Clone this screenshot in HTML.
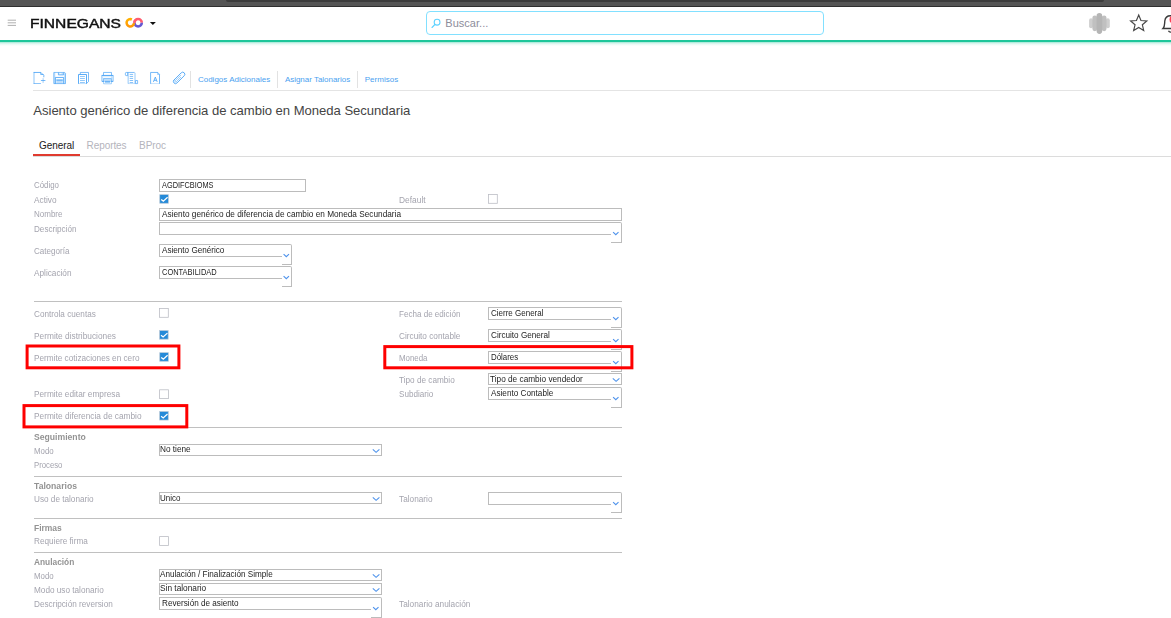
<!DOCTYPE html>
<html><head><meta charset="utf-8"><title>Finnegans</title>
<style>
html,body{margin:0;padding:0;}
html{width:1171px;height:618px;overflow:hidden;}
body{width:1171px;height:618px;overflow:hidden;background:#fff;position:relative;font-family:"Liberation Sans",sans-serif;}
.t{position:absolute;white-space:nowrap;line-height:1.117;font-family:"Liberation Sans",sans-serif;}
.a{position:absolute;box-sizing:border-box;}
#t0{-webkit-text-stroke:0.45px #111;}
.hr{position:absolute;left:34px;width:588px;height:1px;background:#c0c0c0;}
.inp{position:absolute;box-sizing:border-box;border:1px solid #bcbcbc;background:#fff;}
.cb{position:absolute;box-sizing:border-box;width:10px;height:10px;border:1px solid #b0b0b0;background:#fff;}
.cb.on{border:1px solid #9cc4ea;background:#2b8ad9;}
.cb.on svg{position:absolute;left:0;top:0;}
.red{position:absolute;box-sizing:border-box;border:2.4px solid #fe0000;}
.vsep{position:absolute;width:1px;top:71px;height:17px;background:#e2e2e2;}
.ca{position:absolute;box-sizing:border-box;border:1px solid #bcbcbc;border-right:none;background:#fff;height:13px;}
.cbt{position:absolute;box-sizing:border-box;border:1px solid #bcbcbc;border-left:none;border-top-right-radius:2px;background:#fff;height:21px;}
.chev{position:absolute;width:8px;height:5px;}
.ic{position:absolute;}

</style></head><body>
<div class="a" style="left:0;top:0;width:1171px;height:7px;background:#555;border-bottom:1px solid #2f2f2f"></div>
<div class="a" style="left:226px;top:0;width:878px;height:2px;background:#3c3c3c;border-radius:0 0 4px 4px"></div>
<div class="a" style="left:0;top:40px;width:1171px;height:2px;background:#1ec69a"></div>
<div class="a" style="left:0;top:42px;width:1171px;height:4px;background:linear-gradient(rgba(30,198,154,.42),rgba(30,198,154,.12) 45%,rgba(30,198,154,0))"></div>
<svg class="ic" style="left:7px;top:18px" width="10" height="10" viewBox="0 0 10 10"><g stroke="#9c9c9c" stroke-width="0.8"><line x1="0.7" y1="2.2" x2="9" y2="2.2"/><line x1="0.7" y1="4.8" x2="9" y2="4.8"/><line x1="0.7" y1="7.4" x2="9" y2="7.4"/></g></svg>
<svg class="ic" style="left:120px;top:12px" width="40" height="22" viewBox="120 12 40 22">
<defs><linearGradient id="og" x1="0" y1="0" x2="0" y2="1"><stop offset="0" stop-color="#ffb000"/><stop offset="1" stop-color="#ff9708"/></linearGradient></defs>
<g fill="none" stroke-width="2.55">
<path d="M 134.4 22.72 A 3.7 3.7 0 0 1 141.8 22.72" stroke="#ff5c6f"/>
<path d="M 141.8 22.72 A 3.7 3.7 0 0 1 134.4 22.72" stroke="#6559d3"/>
<path d="M 131.87 19.48 A 3.72 3.72 0 1 0 134.0 23.2" stroke="url(#og)"/>
<path d="M 134.4 22.72 A 3.7 3.7 0 0 1 136.2 19.55" stroke="#ff5c6f"/>
</g>
<path d="M149.9 22 L155.9 22 L152.9 25.1 Z" fill="#111"/>
</svg>
<div class="a" style="left:426px;top:11px;width:398px;height:24px;border:1px solid #82e0ff;border-radius:4px;background:#fff"></div>
<svg class="ic" style="left:430px;top:17px" width="12" height="12" viewBox="0 0 12 12"><g fill="none" stroke="#5fd2ff" stroke-width="1.1" stroke-linecap="round"><circle cx="7.1" cy="5.2" r="2.9"/><line x1="4.9" y1="7.5" x2="2" y2="10.5"/></g></svg>
<svg class="ic" style="left:1085px;top:10px" width="30" height="28" viewBox="1085 10 30 28"><defs><filter id="bl" x="-20%" y="-20%" width="140%" height="140%"><feGaussianBlur stdDeviation="0.35"/></filter></defs>
<g filter="url(#bl)"><rect x="1089.1" y="18.3" width="3.9" height="10" rx="1.95" fill="#cfcfcf"/><rect x="1105.9" y="18.3" width="3.9" height="10" rx="1.95" fill="#cfcfcf"/>
<rect x="1092.4" y="15.4" width="4.8" height="15.8" rx="2.4" fill="#c0c0c0"/><rect x="1101.7" y="15.4" width="4.8" height="15.8" rx="2.4" fill="#c0c0c0"/>
<rect x="1096.6" y="13" width="5.6" height="20.9" rx="2.8" fill="#b5b5b5"/></g></svg>
<svg class="ic" style="left:1127px;top:12px" width="24" height="24" viewBox="0 0 24 24"><polygon points="11.70,3.10 13.96,8.49 19.78,8.97 15.36,12.79 16.70,18.48 11.70,15.45 6.70,18.48 8.04,12.79 3.62,8.97 9.44,8.49" fill="none" stroke="#484848" stroke-width="1.2" stroke-linejoin="miter"/></svg>
<svg class="ic" style="left:1160px;top:13px" width="11" height="22" viewBox="0 0 11 22"><g fill="none" stroke="#3a3a3a" stroke-width="1.4"><path d="M3 15.5 C5 13.5 4.5 11 4.8 8 C5.2 4.6 7.5 2.8 10.5 2.8 C13.5 2.8 15.8 4.6 16.2 8 C16.5 11 16 13.5 18 15.5 Z"/><path d="M8.5 17.8 A2.2 2.2 0 0 0 12.5 17.8"/></g><circle cx="13.4" cy="6.4" r="3.9" fill="#fb4257"/></svg>
<svg class="ic" style="left:30px;top:68px" width="160" height="20" viewBox="30 68 160 20"><g fill="none" stroke="#3f9ef5"><path d="M33.6 72.45 H40.9" stroke-width=".8"/><path d="M34.0 72.2 V83.8 M33.6 83.5 H40.9" stroke-width=".6"/><path d="M40.9 72.45 L43.8 75.4 V77.3" stroke-width=".75"/><path d="M40.7 72.6 V74.5 H43.6" stroke-width=".7"/><path d="M40.9 80.5 H45.4" stroke-width=".7"/><path d="M43.1 78.2 V82.9" stroke-width=".6" opacity=".85"/><path d="M53.8 72.45 H64.7 L65.5 73.3 V83.6 H53.8 Z" stroke-width=".62"/><rect x="53.8" y="72.5" width="1.5" height="11.2" fill="#3f9ef5" stroke="none" opacity=".3"/><rect x="64" y="73.2" width="1.5" height="10.5" fill="#3f9ef5" stroke="none" opacity=".3"/><path d="M58.4 72.5 V74.9 H63.7 V72.5" stroke-width=".7"/><rect x="58.6" y="72.8" width="5" height="2" fill="#3f9ef5" stroke="none" opacity=".35"/><rect x="59.3" y="73.2" width="2.3" height=".9" fill="#fff" stroke="none"/><path d="M55.4 83.8 V77.45 H63.6 V83.8" stroke-width=".8"/><rect x="56.3" y="79.3" width="6.5" height="1.7" fill="#3f9ef5" stroke="none" opacity=".7"/><rect x="56.3" y="81" width="6.5" height="2.7" fill="#3f9ef5" stroke="none" opacity=".35"/><path d="M80.3 74.5 V72.45 H88.5 V81.6 L86.9 83.2" stroke-width=".68"/><path d="M78.5 83.8 V74.5 H86.5 V83.8" stroke-width=".85"/><path d="M78.5 83.55 H86.5" stroke-width=".5" opacity=".6"/><path d="M80 76.5 H84.9 M80 78.5 H84.9 M80 80.5 H84.9 M80 82.5 H84.9" stroke-width=".75" opacity=".75"/><path d="M103.5 75.2 V72.45 H111.5 V75.2" stroke-width=".65"/><rect x="101.5" y="75.3" width="12" height="6.3" rx="1" fill="#3f9ef5" stroke="none" opacity=".3"/><path d="M101.6 75.45 H113.4" stroke-width=".8"/><rect x="101.5" y="75.4" width="12" height="6.2" rx="1" stroke-width=".5" opacity=".55"/><rect x="103" y="76.5" width="8" height="1.4" fill="#fff" stroke="none" opacity=".9"/><path d="M101.9 81.3 H103.8 M111.2 81.3 H113.2" stroke-width=".9"/><path d="M103.6 83.8 V78.6 H111.4 V83.8 Z" stroke-width=".6" opacity=".8"/><rect x="105" y="80.8" width="5" height="1.9" fill="#3f9ef5" stroke="none" opacity=".65"/><path d="M127.6 75.6 H126.2 Q125.4 75.6 125.4 74.8 V73.3 Q125.4 72.45 126.3 72.45 H134.6" stroke-width=".68"/><path d="M127.6 72.6 V75.6" stroke-width=".6"/><rect x="127.6" y="72.6" width="1.1" height="11" fill="#3f9ef5" stroke="none" opacity=".5"/><rect x="134.4" y="72.8" width="1.2" height="10.8" fill="#3f9ef5" stroke="none" opacity=".45"/><path d="M128 83.55 H135.6" stroke-width=".5" opacity=".6"/><path d="M129.7 74.4 H133.1 M129.7 76.45 H133.1 M129.7 78.45 H133.1 M129.7 80.5 H133.1 M129.7 82.55 H133.1" stroke-width=".75" opacity=".85"/><path d="M135.6 80.5 H137.6 V83.6 H135.6 Z" stroke-width=".65"/><path d="M150.6 83.8 V72.45 H157.8 L159.5 74.4 V83.8" stroke-width=".72"/><path d="M150.6 83.55 H159.5" stroke-width=".5" opacity=".55"/><path d="M157.6 72.6 V74.5 H159.4" stroke-width=".6" opacity=".8"/><path d="M153.4 81.9 L155.3 77.1 L157.2 81.9 M154.1 80.3 H156.5" stroke-width=".8"/><g transform="rotate(-45 179.1 77.9)" stroke-linecap="round"><rect x="171.9" y="75.8" width="14.4" height="4.2" rx="2.1" stroke-width=".8"/><path d="M182.2 77.15 H174.3 A0.75 0.75 0 0 0 174.3 78.65 H180.6" stroke-width=".6" opacity=".85"/></g></g></svg>
<div class="a" style="left:33px;top:90px;width:1138px;height:1px;background:#e4e4e4"></div>
<div class="vsep" style="left:190px"></div>
<div class="vsep" style="left:277px"></div>
<div class="vsep" style="left:357px"></div>
<div class="a" style="left:33px;top:156px;width:1138px;height:1px;background:#dcdcdc"></div>
<div class="a" style="left:33px;top:153.6px;width:47px;height:2.6px;background:#e03b2f"></div>
<div class="hr" style="top:301px"></div>
<div class="hr" style="top:427px"></div>
<div class="hr" style="top:476px"></div>
<div class="hr" style="top:518px"></div>
<div class="hr" style="top:552px"></div>
<div class="inp" style="left:159px;top:179px;width:147px;height:13px"></div>
<div class="inp" style="left:159px;top:208px;width:463px;height:13px"></div>
<div class="inp" style="left:488px;top:373px;width:134px;height:12px"></div>
<svg class="ic" style="left:611px;top:376px" width="11" height="7" viewBox="0 0 11 7"><path d="M1.80 2.45 L5.10 5.35 L8.40 2.45" fill="none" stroke="#4f93ec" stroke-width="1.1"/></svg>
<div class="inp" style="left:159px;top:444px;width:223px;height:12px"></div>
<svg class="ic" style="left:371px;top:447px" width="11" height="7" viewBox="0 0 11 7"><path d="M1.80 2.45 L5.10 5.35 L8.40 2.45" fill="none" stroke="#4f93ec" stroke-width="1.1"/></svg>
<div class="inp" style="left:159px;top:492px;width:223px;height:12px"></div>
<svg class="ic" style="left:371px;top:495px" width="11" height="7" viewBox="0 0 11 7"><path d="M1.80 2.45 L5.10 5.35 L8.40 2.45" fill="none" stroke="#4f93ec" stroke-width="1.1"/></svg>
<div class="inp" style="left:159px;top:569px;width:223px;height:12px"></div>
<svg class="ic" style="left:371px;top:572px" width="11" height="7" viewBox="0 0 11 7"><path d="M1.80 2.45 L5.10 5.35 L8.40 2.45" fill="none" stroke="#4f93ec" stroke-width="1.1"/></svg>
<div class="inp" style="left:159px;top:583px;width:223px;height:12px"></div>
<svg class="ic" style="left:371px;top:586px" width="11" height="7" viewBox="0 0 11 7"><path d="M1.80 2.45 L5.10 5.35 L8.40 2.45" fill="none" stroke="#4f93ec" stroke-width="1.1"/></svg>
<div class="ca" style="left:159px;top:222px;width:452px"></div>
<div class="cbt" style="left:611px;top:222px;width:11px"></div>
<svg class="ic" style="left:610px;top:230px" width="11" height="7" viewBox="0 0 11 7"><path d="M3.10 2.10 L5.80 4.70 L8.50 2.10" fill="none" stroke="#4f93ec" stroke-width="1.1"/></svg>
<div class="ca" style="left:159px;top:244px;width:123px"></div>
<div class="cbt" style="left:282px;top:244px;width:10px"></div>
<svg class="ic" style="left:281px;top:252px" width="11" height="7" viewBox="0 0 11 7"><path d="M2.60 2.10 L5.30 4.70 L8.00 2.10" fill="none" stroke="#4f93ec" stroke-width="1.1"/></svg>
<div class="ca" style="left:159px;top:266px;width:123px"></div>
<div class="cbt" style="left:282px;top:266px;width:10px"></div>
<svg class="ic" style="left:281px;top:274px" width="11" height="7" viewBox="0 0 11 7"><path d="M2.60 2.10 L5.30 4.70 L8.00 2.10" fill="none" stroke="#4f93ec" stroke-width="1.1"/></svg>
<div class="ca" style="left:488px;top:307px;width:123px"></div>
<div class="cbt" style="left:611px;top:307px;width:11px"></div>
<svg class="ic" style="left:610px;top:315px" width="11" height="7" viewBox="0 0 11 7"><path d="M3.10 2.10 L5.80 4.70 L8.50 2.10" fill="none" stroke="#4f93ec" stroke-width="1.1"/></svg>
<div class="ca" style="left:488px;top:329px;width:123px"></div>
<div class="cbt" style="left:611px;top:329px;width:11px"></div>
<svg class="ic" style="left:610px;top:337px" width="11" height="7" viewBox="0 0 11 7"><path d="M3.10 2.10 L5.80 4.70 L8.50 2.10" fill="none" stroke="#4f93ec" stroke-width="1.1"/></svg>
<div class="ca" style="left:488px;top:351px;width:123px"></div>
<div class="cbt" style="left:611px;top:351px;width:11px"></div>
<svg class="ic" style="left:610px;top:359px" width="11" height="7" viewBox="0 0 11 7"><path d="M3.10 2.10 L5.80 4.70 L8.50 2.10" fill="none" stroke="#4f93ec" stroke-width="1.1"/></svg>
<div class="ca" style="left:488px;top:387px;width:123px"></div>
<div class="cbt" style="left:611px;top:387px;width:11px"></div>
<svg class="ic" style="left:610px;top:395px" width="11" height="7" viewBox="0 0 11 7"><path d="M3.10 2.10 L5.80 4.70 L8.50 2.10" fill="none" stroke="#4f93ec" stroke-width="1.1"/></svg>
<div class="ca" style="left:488px;top:492px;width:123px"></div>
<div class="cbt" style="left:611px;top:492px;width:11px"></div>
<svg class="ic" style="left:610px;top:500px" width="11" height="7" viewBox="0 0 11 7"><path d="M3.10 2.10 L5.80 4.70 L8.50 2.10" fill="none" stroke="#4f93ec" stroke-width="1.1"/></svg>
<div class="ca" style="left:159px;top:597px;width:212px"></div>
<div class="cbt" style="left:371px;top:597px;width:11px"></div>
<svg class="ic" style="left:370px;top:605px" width="11" height="7" viewBox="0 0 11 7"><path d="M3.10 2.10 L5.80 4.70 L8.50 2.10" fill="none" stroke="#4f93ec" stroke-width="1.1"/></svg>
<svg class="ic" style="left:159px;top:194px" width="12" height="12" viewBox="0 0 12 12"><rect x="0.75" y="0.65" width="8.6" height="8.6" fill="#258ad8" stroke="#b9c9d8" stroke-width=".7"/><path d="M2.20 5.40 L4.30 7.10 L8.60 3.20" fill="none" stroke="#fff" stroke-width="1.25"/></svg>
<svg class="ic" style="left:488px;top:194px" width="12" height="12" viewBox="0 0 12 12"><rect x="0.50" y="0.50" width="8.8" height="8.8" fill="#fff" stroke="#bcbec5" stroke-width=".8"/></svg>
<svg class="ic" style="left:159px;top:308px" width="12" height="12" viewBox="0 0 12 12"><rect x="0.50" y="0.50" width="8.8" height="8.8" fill="#fff" stroke="#bcbec5" stroke-width=".8"/></svg>
<svg class="ic" style="left:159px;top:330px" width="12" height="12" viewBox="0 0 12 12"><rect x="0.55" y="0.55" width="8.6" height="8.6" fill="#258ad8" stroke="#b9c9d8" stroke-width=".7"/><path d="M2.00 5.30 L4.10 7.00 L8.40 3.10" fill="none" stroke="#fff" stroke-width="1.25"/></svg>
<svg class="ic" style="left:159px;top:352px" width="12" height="12" viewBox="0 0 12 12"><rect x="0.75" y="0.65" width="8.6" height="8.6" fill="#258ad8" stroke="#b9c9d8" stroke-width=".7"/><path d="M2.20 5.40 L4.30 7.10 L8.60 3.20" fill="none" stroke="#fff" stroke-width="1.25"/></svg>
<svg class="ic" style="left:159px;top:389px" width="12" height="12" viewBox="0 0 12 12"><rect x="0.60" y="0.80" width="8.8" height="8.8" fill="#fff" stroke="#bcbec5" stroke-width=".8"/></svg>
<svg class="ic" style="left:159px;top:411px" width="12" height="12" viewBox="0 0 12 12"><rect x="0.65" y="0.45" width="8.6" height="8.6" fill="#258ad8" stroke="#b9c9d8" stroke-width=".7"/><path d="M2.10 5.20 L4.20 6.90 L8.50 3.00" fill="none" stroke="#fff" stroke-width="1.25"/></svg>
<svg class="ic" style="left:159px;top:536px" width="12" height="12" viewBox="0 0 12 12"><rect x="0.60" y="0.60" width="8.8" height="8.8" fill="#fff" stroke="#bcbec5" stroke-width=".8"/></svg>
<svg class="ic" style="left:24px;top:343px" width="159" height="29" viewBox="0 0 159 29"><rect x="3.10" y="3.00" width="151.80" height="21.80" fill="none" stroke="#fe0000" stroke-width="3.0"/></svg>
<svg class="ic" style="left:21px;top:403px" width="170" height="28" viewBox="0 0 170 28"><rect x="3.00" y="2.60" width="162.80" height="21.30" fill="none" stroke="#fe0000" stroke-width="3.0"/></svg>
<svg class="ic" style="left:382px;top:344px" width="254" height="28" viewBox="0 0 254 28"><rect x="2.80" y="2.60" width="247.10" height="21.20" fill="none" stroke="#fe0000" stroke-width="3.0"/></svg>
<span id="t0" class="t" style="left:29.7px;top:17.01px;font-size:13.4px;color:#111;font-weight:normal;letter-spacing:0.000px;transform:scaleX(1.1648);transform-origin:0 0">FINNEGANS</span>
<span id="t1" class="t" style="left:445.3px;top:17.00px;font-size:11px;color:#8d8d9b;font-weight:normal;letter-spacing:0.025px">Buscar...</span>
<span id="t2" class="t" style="left:197.9px;top:76.01px;font-size:8.0px;color:#4a9ff0;font-weight:normal;letter-spacing:0.014px">Codigos Adicionales</span>
<span id="t3" class="t" style="left:284.9px;top:76.01px;font-size:8.0px;color:#4a9ff0;font-weight:normal;letter-spacing:-0.022px">Asignar Talonarios</span>
<span id="t4" class="t" style="left:364.7px;top:76.01px;font-size:8.0px;color:#4a9ff0;font-weight:normal;letter-spacing:0.022px">Permisos</span>
<span id="t5" class="t" style="left:33.3px;top:104.02px;font-size:13.1px;color:#444;font-weight:normal;letter-spacing:-0.037px">Asiento genérico de diferencia de cambio en Moneda Secundaria</span>
<span id="t6" class="t" style="left:39.0px;top:140.01px;font-size:10.0px;color:#1a1a1a;font-weight:normal;letter-spacing:-0.063px">General</span>
<span id="t7" class="t" style="left:86.5px;top:140.01px;font-size:10.0px;color:#b4b4bc;font-weight:normal;letter-spacing:-0.068px">Reportes</span>
<span id="t8" class="t" style="left:139.1px;top:140.01px;font-size:10.0px;color:#b4b4bc;font-weight:normal;letter-spacing:-0.109px">BProc</span>
<span id="t9" class="t" style="left:34.2px;top:181.00px;font-size:8.2px;color:#a4a4ae;font-weight:normal;letter-spacing:0.000px;transform:scaleX(0.9633);transform-origin:0 0">Código</span>
<span id="t10" class="t" style="left:34.2px;top:196.00px;font-size:8.2px;color:#a4a4ae;font-weight:normal;letter-spacing:0.000px;transform:scaleX(1.0091);transform-origin:0 0">Activo</span>
<span id="t11" class="t" style="left:34.2px;top:210.00px;font-size:8.2px;color:#a4a4ae;font-weight:normal;letter-spacing:0.000px;transform:scaleX(0.9785);transform-origin:0 0">Nombre</span>
<span id="t12" class="t" style="left:34.2px;top:225.00px;font-size:8.2px;color:#a4a4ae;font-weight:normal;letter-spacing:0.000px;transform:scaleX(0.9934);transform-origin:0 0">Descripción</span>
<span id="t13" class="t" style="left:34.2px;top:247.00px;font-size:8.2px;color:#a4a4ae;font-weight:normal;letter-spacing:0.000px;transform:scaleX(0.9870);transform-origin:0 0">Categoría</span>
<span id="t14" class="t" style="left:34.2px;top:269.00px;font-size:8.2px;color:#a4a4ae;font-weight:normal;letter-spacing:0.000px;transform:scaleX(1.0046);transform-origin:0 0">Aplicación</span>
<span id="t15" class="t" style="left:34.2px;top:310.00px;font-size:8.2px;color:#a4a4ae;font-weight:normal;letter-spacing:0.000px;transform:scaleX(0.9983);transform-origin:0 0">Controla cuentas</span>
<span id="t16" class="t" style="left:34.2px;top:332.00px;font-size:8.2px;color:#a4a4ae;font-weight:normal;letter-spacing:0.000px;transform:scaleX(1.0180);transform-origin:0 0">Permite distribuciones</span>
<span id="t17" class="t" style="left:34.2px;top:354.00px;font-size:8.2px;color:#a4a4ae;font-weight:normal;letter-spacing:0.000px;transform:scaleX(1.0036);transform-origin:0 0">Permite cotizaciones en cero</span>
<span id="t18" class="t" style="left:34.2px;top:390.00px;font-size:8.2px;color:#a4a4ae;font-weight:normal;letter-spacing:0.000px;transform:scaleX(1.0107);transform-origin:0 0">Permite editar empresa</span>
<span id="t19" class="t" style="left:34.2px;top:412.00px;font-size:8.2px;color:#a4a4ae;font-weight:normal;letter-spacing:0.000px;transform:scaleX(1.0146);transform-origin:0 0">Permite diferencia de cambio</span>
<span id="t20" class="t" style="left:34.2px;top:433.00px;font-size:8.2px;color:#939393;font-weight:bold;letter-spacing:0.000px;transform:scaleX(1.0541);transform-origin:0 0">Seguimiento</span>
<span id="t21" class="t" style="left:34.2px;top:447.00px;font-size:8.2px;color:#a4a4ae;font-weight:normal;letter-spacing:0.000px;transform:scaleX(0.9617);transform-origin:0 0">Modo</span>
<span id="t22" class="t" style="left:34.2px;top:461.00px;font-size:8.2px;color:#a4a4ae;font-weight:normal;letter-spacing:0.000px;transform:scaleX(0.9452);transform-origin:0 0">Proceso</span>
<span id="t23" class="t" style="left:34.2px;top:482.00px;font-size:8.2px;color:#939393;font-weight:bold;letter-spacing:0.000px;transform:scaleX(1.0540);transform-origin:0 0">Talonarios</span>
<span id="t24" class="t" style="left:34.2px;top:495.00px;font-size:8.2px;color:#a4a4ae;font-weight:normal;letter-spacing:0.000px;transform:scaleX(0.9996);transform-origin:0 0">Uso de talonario</span>
<span id="t25" class="t" style="left:34.2px;top:524.00px;font-size:8.2px;color:#939393;font-weight:bold;letter-spacing:0.000px;transform:scaleX(1.0350);transform-origin:0 0">Firmas</span>
<span id="t26" class="t" style="left:34.2px;top:537.00px;font-size:8.2px;color:#a4a4ae;font-weight:normal;letter-spacing:0.000px;transform:scaleX(1.0018);transform-origin:0 0">Requiere firma</span>
<span id="t27" class="t" style="left:34.2px;top:558.00px;font-size:8.2px;color:#939393;font-weight:bold;letter-spacing:0.000px;transform:scaleX(1.0182);transform-origin:0 0">Anulación</span>
<span id="t28" class="t" style="left:34.2px;top:572.00px;font-size:8.2px;color:#a4a4ae;font-weight:normal;letter-spacing:0.000px;transform:scaleX(0.9617);transform-origin:0 0">Modo</span>
<span id="t29" class="t" style="left:34.2px;top:586.00px;font-size:8.2px;color:#a4a4ae;font-weight:normal;letter-spacing:0.000px;transform:scaleX(1.0009);transform-origin:0 0">Modo uso talonario</span>
<span id="t30" class="t" style="left:34.2px;top:600.00px;font-size:8.2px;color:#a4a4ae;font-weight:normal;letter-spacing:0.000px;transform:scaleX(1.0008);transform-origin:0 0">Descripción reversion</span>
<span id="t31" class="t" style="left:398.7px;top:196.00px;font-size:8.2px;color:#a4a4ae;font-weight:normal;letter-spacing:0.000px;transform:scaleX(1.0249);transform-origin:0 0">Default</span>
<span id="t32" class="t" style="left:398.7px;top:310.00px;font-size:8.2px;color:#a4a4ae;font-weight:normal;letter-spacing:0.000px;transform:scaleX(0.9846);transform-origin:0 0">Fecha de edición</span>
<span id="t33" class="t" style="left:398.7px;top:332.00px;font-size:8.2px;color:#a4a4ae;font-weight:normal;letter-spacing:0.000px;transform:scaleX(1.0068);transform-origin:0 0">Circuito contable</span>
<span id="t34" class="t" style="left:398.7px;top:354.00px;font-size:8.2px;color:#a4a4ae;font-weight:normal;letter-spacing:0.000px;transform:scaleX(0.9630);transform-origin:0 0">Moneda</span>
<span id="t35" class="t" style="left:398.7px;top:376.00px;font-size:8.2px;color:#a4a4ae;font-weight:normal;letter-spacing:0.000px;transform:scaleX(1.0002);transform-origin:0 0">Tipo de cambio</span>
<span id="t36" class="t" style="left:398.7px;top:390.00px;font-size:8.2px;color:#a4a4ae;font-weight:normal;letter-spacing:0.000px;transform:scaleX(0.9886);transform-origin:0 0">Subdiario</span>
<span id="t37" class="t" style="left:398.7px;top:495.00px;font-size:8.2px;color:#a4a4ae;font-weight:normal;letter-spacing:0.000px;transform:scaleX(1.0080);transform-origin:0 0">Talonario</span>
<span id="t38" class="t" style="left:398.7px;top:600.00px;font-size:8.2px;color:#a4a4ae;font-weight:normal;letter-spacing:0.000px;transform:scaleX(1.0119);transform-origin:0 0">Talonario anulación</span>
<span id="t39" class="t" style="left:161.6px;top:181.00px;font-size:8.2px;color:#1c1c1c;font-weight:normal;letter-spacing:0.000px;transform:scaleX(0.8983);transform-origin:0 0">AGDIFCBIOMS</span>
<span id="t40" class="t" style="left:161.6px;top:210.00px;font-size:8.2px;color:#1c1c1c;font-weight:normal;letter-spacing:0.000px;transform:scaleX(1.0078);transform-origin:0 0">Asiento genérico de diferencia de cambio en Moneda Secundaria</span>
<span id="t41" class="t" style="left:161.6px;top:246.00px;font-size:8.2px;color:#1c1c1c;font-weight:normal;letter-spacing:0.000px;transform:scaleX(0.9934);transform-origin:0 0">Asiento Genérico</span>
<span id="t42" class="t" style="left:161.6px;top:268.00px;font-size:8.2px;color:#1c1c1c;font-weight:normal;letter-spacing:0.000px;transform:scaleX(0.9131);transform-origin:0 0">CONTABILIDAD</span>
<span id="t43" class="t" style="left:491.0px;top:309.00px;font-size:8.2px;color:#1c1c1c;font-weight:normal;letter-spacing:0.000px;transform:scaleX(0.9776);transform-origin:0 0">Cierre General</span>
<span id="t44" class="t" style="left:491.0px;top:331.00px;font-size:8.2px;color:#1c1c1c;font-weight:normal;letter-spacing:0.000px;transform:scaleX(0.9957);transform-origin:0 0">Circuito General</span>
<span id="t45" class="t" style="left:491.0px;top:353.00px;font-size:8.2px;color:#1c1c1c;font-weight:normal;letter-spacing:0.000px;transform:scaleX(0.9639);transform-origin:0 0">Dólares</span>
<span id="t46" class="t" style="left:489.9px;top:375.00px;font-size:8.2px;color:#1c1c1c;font-weight:normal;letter-spacing:0.000px;transform:scaleX(1.0077);transform-origin:0 0">Tipo de cambio vendedor</span>
<span id="t47" class="t" style="left:491.0px;top:389.00px;font-size:8.2px;color:#1c1c1c;font-weight:normal;letter-spacing:0.000px;transform:scaleX(0.9990);transform-origin:0 0">Asiento Contable</span>
<span id="t48" class="t" style="left:160.3px;top:445.00px;font-size:8.2px;color:#1c1c1c;font-weight:normal;letter-spacing:0.000px;transform:scaleX(1.0066);transform-origin:0 0">No tiene</span>
<span id="t49" class="t" style="left:160.3px;top:494.00px;font-size:8.2px;color:#1c1c1c;font-weight:normal;letter-spacing:0.000px;transform:scaleX(0.9743);transform-origin:0 0">Unico</span>
<span id="t50" class="t" style="left:160.3px;top:570.00px;font-size:8.2px;color:#1c1c1c;font-weight:normal;letter-spacing:0.000px;transform:scaleX(0.9945);transform-origin:0 0">Anulación / Finalización Simple</span>
<span id="t51" class="t" style="left:160.3px;top:584.00px;font-size:8.2px;color:#1c1c1c;font-weight:normal;letter-spacing:0.000px;transform:scaleX(1.0150);transform-origin:0 0">Sin talonario</span>
<span id="t52" class="t" style="left:161.7px;top:599.00px;font-size:8.2px;color:#1c1c1c;font-weight:normal;letter-spacing:0.000px;transform:scaleX(0.9958);transform-origin:0 0">Reversión de asiento</span>
</body></html>
